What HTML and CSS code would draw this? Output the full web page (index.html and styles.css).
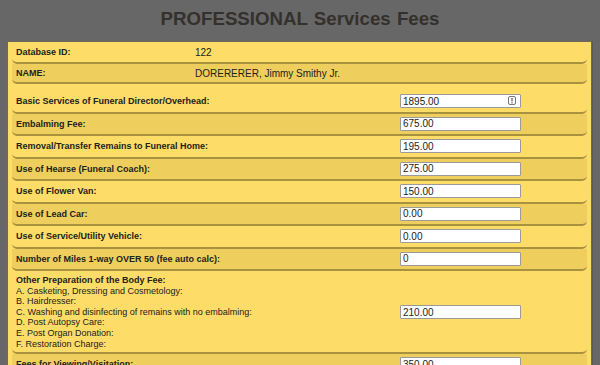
FILE: index.html
```html
<!DOCTYPE html>
<html lang="en">
<head>
  <meta charset="UTF-8">
  <title>PROFESSIONAL Services Fees</title>
  <link rel="stylesheet" href="styles.css">
</head>
<body>
  <h1>PROFESSIONAL Services Fees</h1>

  <div class="panel">
    <div class="info-row">
      <span class="label">Database ID:</span>
      <span class="value">122</span>
    </div>
    <div class="info-row alt">
      <span class="label">NAME:</span>
      <span class="value">DORERERER, Jimmy Smithy Jr.</span>
    </div>

    <div class="spacer"></div>

    <div class="fee-row">
      <label for="basic">Basic Services of Funeral Director/Overhead:</label>
      <div class="field">
        <input type="text" id="basic" value="1895.00">
        <span class="key-icon">
          <svg width="8" height="9" viewBox="0 0 8 9"><rect x="0.5" y="0.5" width="7" height="8" rx="1.5" fill="#fff" stroke="#777"/><rect x="3.4" y="2" width="1.2" height="3.4" fill="#555"/><rect x="3.4" y="6.2" width="1.2" height="1.1" fill="#555"/></svg>
        </span>
      </div>
    </div>
    <div class="fee-row alt">
      <label for="embalm">Embalming Fee:</label>
      <input type="text" id="embalm" value="675.00">
    </div>
    <div class="fee-row">
      <label for="removal">Removal/Transfer Remains to Funeral Home:</label>
      <input type="text" id="removal" value="195.00">
    </div>
    <div class="fee-row alt">
      <label for="hearse">Use of Hearse (Funeral Coach):</label>
      <input type="text" id="hearse" value="275.00">
    </div>
    <div class="fee-row">
      <label for="flower">Use of Flower Van:</label>
      <input type="text" id="flower" value="150.00">
    </div>
    <div class="fee-row alt">
      <label for="lead">Use of Lead Car:</label>
      <input type="text" id="lead" value="0.00">
    </div>
    <div class="fee-row">
      <label for="utility">Use of Service/Utility Vehicle:</label>
      <input type="text" id="utility" value="0.00">
    </div>
    <div class="fee-row alt">
      <label for="miles">Number of Miles 1-way OVER 50 (fee auto calc):</label>
      <input type="text" id="miles" value="0">
    </div>
    <div class="fee-row tall">
      <div class="label-block">
        <label for="prep">Other Preparation of the Body Fee:</label>
        <span>A. Casketing, Dressing and Cosmetology:</span>
        <span>B. Hairdresser:</span>
        <span>C. Washing and disinfecting of remains with no embalming:</span>
        <span>D. Post Autopsy Care:</span>
        <span>E. Post Organ Donation:</span>
        <span>F. Restoration Charge:</span>
      </div>
      <input type="text" id="prep" value="210.00">
    </div>
    <div class="fee-row alt">
      <label for="viewing">Fees for Viewing/Visitation:</label>
      <input type="text" id="viewing" value="350.00">
    </div>
  </div>
</body>
</html>
```

FILE: styles.css
```css
body {
  margin: 0;
  background: #676767;
  font-family: "Liberation Sans", Arial, sans-serif;
  color: #22221c;
  overflow: hidden;
}
h1 {
  margin: 0;
  height: 41px;
  line-height: 38px;
  text-align: center;
  font-size: 18.7px;
  word-spacing: 1px;
  color: #34302b;
}
.panel {
  margin: 0 8px 0 7px;
  padding: 0 4px;
  background: #fddc68;
  border: 1px solid #6f6a58;
  box-shadow: 1px 0 0 #5a5a5a;
}
.info-row, .fee-row {
  box-sizing: border-box;
  display: grid;
  align-items: center;
  padding: 0 4px;
  border-bottom: 2px solid #a8923f;
  border-radius: 0 0 5px 5px;
  font-size: 9px;
}
.info-row {
  grid-template-columns: 179px 1fr;
  height: 20px;
}
.info-row:first-child {
  height: 22px;
}
.value {
  font-size: 10px;
}
.alt {
  background: #eecf5e;
}
.label, label {
  font-weight: bold;
}
.spacer {
  height: 7px;
}
.fee-row {
  grid-template-columns: 384px 121px;
  height: 22.5px;
}
.fee-row.tall {
  height: auto;
  padding-top: 4px;
  padding-bottom: 3px;
}
.label-block {
  display: flex;
  flex-direction: column;
  line-height: 10.6px;
}
input {
  box-sizing: border-box;
  width: 121px;
  height: 14px;
  margin: 0;
  padding: 0 2px;
  border: 1px solid #9a9a9a;
  border-radius: 1px;
  background: #fff;
  font-family: "Liberation Sans", Arial, sans-serif;
  font-size: 10px;
  color: #222;
}
.field {
  position: relative;
  width: 121px;
  height: 14px;
}
.key-icon {
  position: absolute;
  right: 5px;
  top: 2px;
  line-height: 0;
}
```
